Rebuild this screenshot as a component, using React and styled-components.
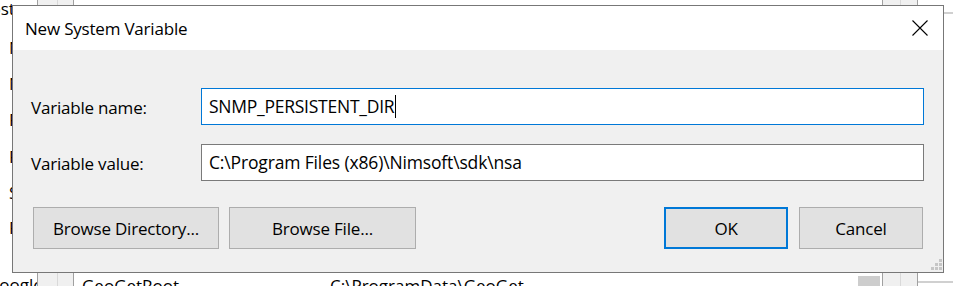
import React from 'react';
import styled, { createGlobalStyle } from 'styled-components';

const Global = createGlobalStyle`
  html, body { margin: 0; padding: 0; background: #fff; }
  body {
    width: 953px; height: 286px; overflow: hidden;
    font-family: "Open Sans", "Noto Sans", "DejaVu Sans", sans-serif;
    color: #000;
  }
`;

const Screen = styled.div`
  position: relative;
  width: 953px;
  height: 286px;
  overflow: hidden;
  background: #fff;
  display: flex;
`;

/* ---------- background window (behind the dialog) ---------- */
const NameCol = styled.div`
  width: 37px;
  flex: none;
  display: flex;
  flex-direction: column;
  font-size: 17px;
  line-height: 20px;
  white-space: nowrap;
`;

const NameFrag = styled.div`
  margin-top: ${p => p.$top}px;
  margin-left: ${p => p.$left}px;
  height: 20px;
`;

const Gutter = styled.div`
  flex: none;
  display: flex;
  height: 100%;
  border-left: 1px solid #a0a0a0;
  border-right: 1px solid #a0a0a0;
  background: #f0f0f0;
`;

const GutterCell = styled.div`
  width: ${p => p.$w}px;
  height: 100%;
  & + & { border-left: 1px solid #d9d9d9; }
`;

const MainCol = styled.div`
  flex: 1;
  display: flex;
  flex-direction: column;
  justify-content: flex-end;
`;

const BottomRow = styled.div`
  display: flex;
  align-items: flex-end;
  height: 20px;
  margin-bottom: -10px;
  font-size: 17px;
  line-height: 20px;
  white-space: nowrap;
`;

const Cell = styled.div`
  width: ${p => p.$w}px;
  padding-left: ${p => p.$pad}px;
  flex: none;
`;

const ScrollThumb = styled.div`
  width: 22px;
  height: 13px;
  background: #cdcdcd;
  flex: none;
  align-self: flex-start;
  margin-left: auto;
  margin-right: 2px;
`;

const RightEdge = styled.div`
  width: 35px;
  flex: none;
  display: flex;
  flex-direction: column;
  justify-content: space-between;
  padding: 12px 0 3px;
  box-sizing: border-box;
`;

const HLine = styled.div`
  height: 2px;
  background: #d0d0d0;
`;

/* ---------- dialog ---------- */
const Dialog = styled.div`
  position: absolute;
  left: 12px;
  top: 5px;
  width: 932px;
  height: 268px;
  box-sizing: border-box;
  border: 1px solid #777777;
  background: #f0f0f0;
  display: flex;
  flex-direction: column;
`;

const TitleBar = styled.div`
  height: 44px;
  flex: none;
  background: #fff;
  display: flex;
  align-items: center;
  justify-content: space-between;
  padding: 0 15px 0 12px;
`;

const Title = styled.div`
  font-size: 17px;
  letter-spacing: -0.2px;
  margin-top: 1px;
`;

const Body = styled.div`
  flex: 1;
  display: flex;
  flex-direction: column;
  padding: 38px 19px 0 18px;
`;

const FieldRow = styled.div`
  display: flex;
  align-items: center;
  height: 37px;
  & + & { margin-top: 19px; }
`;

const Label = styled.div`
  width: 170px;
  flex: none;
  font-size: 17px;
  letter-spacing: -0.2px;
  margin-top: 1px;
`;

const Input = styled.div`
  flex: 1;
  height: 37px;
  box-sizing: border-box;
  border: 1px solid ${p => (p.$focused ? '#0078d7' : '#7a7a7a')};
  background: #fff;
  display: flex;
  align-items: center;
  padding-left: 7px;
  padding-bottom: 2px;
  font-size: 17.5px;
  letter-spacing: ${p => p.$spacing}px;
  white-space: nowrap;
`;

const Caret = styled.span`
  display: inline-block;
  width: 1px;
  height: 23px;
  background: #000;
  margin-left: 1px;
  margin-top: 2px;
`;

const ButtonRow = styled.div`
  display: flex;
  margin-top: 26px;
  padding: 0 1px 0 2px;
`;

const Button = styled.div`
  width: ${p => p.$w}px;
  height: 42px;
  box-sizing: border-box;
  border: ${p => (p.$default ? '2px solid #0078d7' : '1px solid #adadad')};
  background: #e1e1e1;
  display: flex;
  align-items: center;
  justify-content: center;
  font-size: 17px;
  letter-spacing: -0.2px;
  margin-left: ${p => p.$gap || 0}px;
  ${p => p.$push && 'margin-left: auto;'}
`;

const Grip = styled.svg`
  position: absolute;
  right: 1px;
  bottom: 2px;
`;

function CloseIcon() {
  return (
    <svg width="16" height="16" viewBox="0 0 16 16">
      <path d="M0.5 0.5 L15.5 15.5 M15.5 0.5 L0.5 15.5" stroke="#000" strokeWidth="1.1" fill="none" />
    </svg>
  );
}

function ResizeGrip() {
  const dots = [
    [8, 0],
    [4, 4], [8, 4],
    [0, 8], [4, 8], [8, 8],
  ];
  return (
    <Grip width="12" height="12" viewBox="0 0 12 12">
      {dots.map(([x, y]) => (
        <rect key={`${x}-${y}`} x={x + 1} y={y + 1} width="3" height="3" fill="#c6c6c6" />
      ))}
    </Grip>
  );
}

const names = [
  { t: 'Host', top: -1, left: -22 },
  { t: 'NUMBER_OF_PROCESSORS', top: 19, left: 9 },
  { t: 'NVM_HOME', top: 16, left: 9 },
  { t: 'PATH', top: 16, left: 9 },
  { t: 'PATHEXT', top: 17, left: 9 },
  { t: 'SNMP_HOME', top: 16, left: 9 },
  { t: 'PROCESSOR_LEVEL', top: 15, left: 9 },
  { t: 'Google', top: 37, left: -13 },
];

export default function App() {
  return (
    <>
      <Global />
      <Screen>
        <NameCol>
          {names.map((n, i) => (
            <NameFrag key={i} $top={n.top} $left={n.left}>{n.t}</NameFrag>
          ))}
        </NameCol>
        <Gutter>
          <GutterCell $w={19} />
          <GutterCell $w={15} />
        </Gutter>
        <MainCol>
          <BottomRow>
            <Cell $w={248} $pad={8}>GeoGetRoot</Cell>
            <Cell $w={300} $pad={0}>C:\ProgramData\GeoGet</Cell>
            <ScrollThumb />
          </BottomRow>
        </MainCol>
        <Gutter>
          <GutterCell $w={17} />
          <GutterCell $w={16} />
        </Gutter>
        <RightEdge>
          <HLine />
          <HLine />
        </RightEdge>

        <Dialog>
          <TitleBar>
            <Title>New System Variable</Title>
            <CloseIcon />
          </TitleBar>
          <Body>
            <FieldRow>
              <Label>Variable name:</Label>
              <Input $focused $spacing={-0.25}>SNMP_PERSISTENT_DIR<Caret /></Input>
            </FieldRow>
            <FieldRow>
              <Label>Variable value:</Label>
              <Input $spacing={-0.15}>C:\Program Files (x86)\Nimsoft\sdk\nsa</Input>
            </FieldRow>
            <ButtonRow>
              <Button $w={186}>Browse Directory...</Button>
              <Button $w={187} $gap={10}>Browse File...</Button>
              <Button $w={124} $push $default>OK</Button>
              <Button $w={124} $gap={11}>Cancel</Button>
            </ButtonRow>
          </Body>
          <ResizeGrip />
        </Dialog>
      </Screen>
    </>
  );
}
